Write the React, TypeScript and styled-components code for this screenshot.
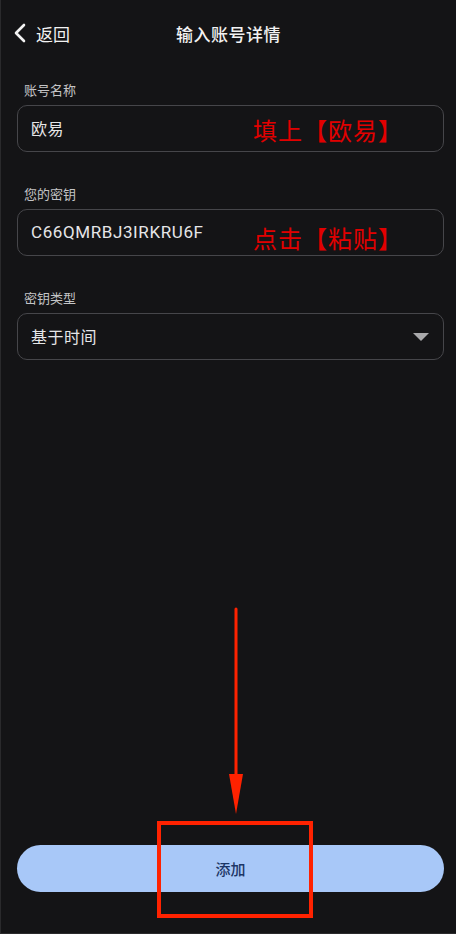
import React from "react";
import styled, { createGlobalStyle } from "styled-components";

const Global = createGlobalStyle`
  html, body { margin: 0; padding: 0; background: #141416; }
  body { font-family: "Noto Sans CJK SC", "Noto Sans", sans-serif; }
  * { box-sizing: border-box; }
`;

const Screen = styled.div`
  position: relative;
  width: 456px;
  height: 934px;
  background: #141416;
  border-left: 1px solid #2a2a2c;
  border-bottom: 1px solid #2a2a2c;
  display: flex;
  flex-direction: column;
  color: #e8e8ea;
  overflow: hidden;
`;

const Header = styled.div`
  position: relative;
  height: 66px;
  display: flex;
  align-items: center;
  justify-content: center;
  flex-shrink: 0;
`;

const Back = styled.div`
  position: absolute;
  left: 12px;
  top: 0;
  height: 66px;
  display: flex;
  align-items: center;
  gap: 9px;
  font-size: 17px;
  color: #f2f2f2;
`;

const Title = styled.div`
  font-size: 17px;
  font-weight: 500;
  color: #f2f2f2;
  letter-spacing: 0.5px;
`;

const Form = styled.div`
  display: flex;
  flex-direction: column;
  padding: 15px 12px 0 16px;
  gap: 33px;
`;

const Field = styled.div`
  display: flex;
  flex-direction: column;
  gap: 6px;
`;

const Label = styled.div`
  font-size: 13px;
  line-height: 18px;
  color: #c4c4c6;
  padding-left: 7px;
`;

const Box = styled.div`
  height: 47px;
  border: 1px solid #46464a;
  border-radius: 10px;
  display: flex;
  align-items: center;
  padding: 0 13px 2px 13px;
  position: relative;
`;

const Value = styled.span<{ $latin?: boolean }>`
  font-size: ${(p) => (p.$latin ? "17px" : "16px")};
  line-height: 20px;
  color: #e6e6e8;
  font-family: ${(p) =>
    p.$latin ? `"Roboto", "Noto Sans", sans-serif` : `"Noto Sans CJK SC", sans-serif`};
  letter-spacing: ${(p) => (p.$latin ? "0.6px" : "0.5px")};
`;

const Note = styled.span<{ $dy: number }>`
  position: absolute;
  left: 235px;
  top: 50%;
  transform: translateY(calc(-50% + ${(p) => p.$dy}px));
  font-size: 24px;
  line-height: 30px;
  color: #e20000;
  font-family: "Noto Sans CJK SC", serif;
  font-weight: 400;
  letter-spacing: 1px;
  white-space: nowrap;
`;

const Caret = styled.div`
  margin-left: auto;
  margin-right: 1px;
  margin-top: 2px;
  width: 0;
  height: 0;
  border-left: 8px solid transparent;
  border-right: 8px solid transparent;
  border-top: 8px solid #a9a9ab;
`;

const Spacer = styled.div`
  flex: 1;
`;

const Footer = styled.div`
  padding: 0 12px 41px 16px;
`;

const AddButton = styled.div`
  height: 47px;
  border-radius: 24px;
  background: #a8c8f8;
  display: flex;
  align-items: center;
  justify-content: center;
  font-size: 15px;
  font-weight: 500;
  color: #1c3666;
`;

const Arrow = styled.svg`
  position: absolute;
  left: 226px;
  top: 606px;
`;

const Highlight = styled.div`
  position: absolute;
  left: 156px;
  top: 821px;
  width: 156px;
  height: 97px;
  border: 4px solid #ff2200;
`;

export default function App() {
  return (
    <>
      <Global />
      <Screen>
        <Header>
          <Back>
            <svg width="14" height="20" viewBox="0 0 14 20">
              <path d="M11 2 L3 10 L11 18" fill="none" stroke="#f2f2f2" strokeWidth="2.6" strokeLinecap="round" strokeLinejoin="round" />
            </svg>
            <span>返回</span>
          </Back>
          <Title>输入账号详情</Title>
        </Header>
        <Form>
          <Field>
            <Label>账号名称</Label>
            <Box>
              <Value>欧易</Value>
              <Note $dy={1}>填上【欧易】</Note>
            </Box>
          </Field>
          <Field>
            <Label>您的密钥</Label>
            <Box>
              <Value $latin>C66QMRBJ3IRKRU6F</Value>
              <Note $dy={5}>点击【粘贴】</Note>
            </Box>
          </Field>
          <Field>
            <Label>密钥类型</Label>
            <Box>
              <Value>基于时间</Value>
              <Caret />
            </Box>
          </Field>
        </Form>
        <Spacer />
        <Footer>
          <AddButton>添加</AddButton>
        </Footer>
        <Arrow width="18" height="210" viewBox="0 0 18 210">
          <line x1="9" y1="3" x2="9" y2="175" stroke="#ff2200" strokeWidth="3" strokeLinecap="round" />
          <polygon points="2,168 16,168 9,208" fill="#ff2200" />
        </Arrow>
        <Highlight />
      </Screen>
    </>
  );
}
